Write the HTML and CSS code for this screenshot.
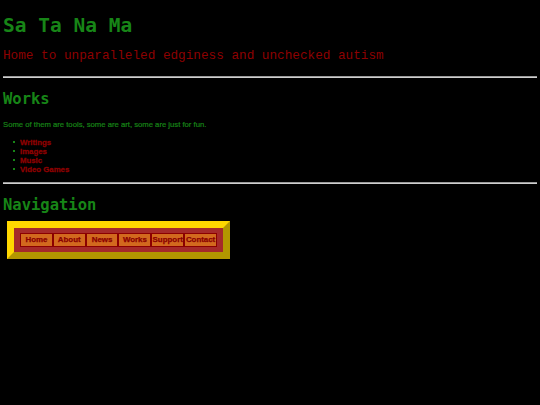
FILE: index.html
```html
<!DOCTYPE html>
<html>
<head>
<meta charset="utf-8">
<title>Sa Ta Na Ma</title>
<link rel="stylesheet" href="styles.css">
</head>
<body>
<h1 class="title">Sa Ta Na Ma</h1>
<p class="tagline">Home to unparalleled edginess and unchecked autism</p>
<hr class="rule">
<h2 class="section">Works</h2>
<p class="intro">Some of them are tools, some are art, some are just for fun.</p>
<ul class="works">
  <li><a href="#">Writings</a></li>
  <li><a href="#">Images</a></li>
  <li><a href="#">Music</a></li>
  <li><a href="#">Video Games</a></li>
</ul>
<hr class="rule rule-second">
<h2 class="section section-nav">Navigation</h2>
<div class="navbox">
  <div class="navrow">
    <a class="navbtn" href="#">Home</a>
    <a class="navbtn" href="#">About</a>
    <a class="navbtn" href="#">News</a>
    <a class="navbtn" href="#">Works</a>
    <a class="navbtn" href="#">Support</a>
    <a class="navbtn" href="#">Contact</a>
  </div>
</div>
</body>
</html>
```
FILE: styles.css
```css
html { background: #000; }
body {
  margin: 0;
  padding: 3px;
  background: #000;
  color: #1a8a1a;
  font-family: "Liberation Sans", Arial, sans-serif;
}
.title {
  margin: 11px 0 0 0;
  font-family: "DejaVu Sans Mono", monospace;
  font-weight: bold;
  font-size: 19.5px;
  line-height: 24px;
  color: #178517;
}
.tagline {
  margin: 10px 0 0 0;
  font-family: "Liberation Mono", "Courier New", monospace;
  font-size: 12.7px;
  line-height: 16px;
  color: #8e0000;
}
.rule {
  margin: 12px 0 0 0;
  height: 0;
  border: 0;
  border-top: 1px solid #9a9a9a;
  border-bottom: 1px solid #cfcfcf;
}
.rule-second { margin-top: 8.5px; }
.section {
  margin: 11px 0 0 0;
  font-family: "DejaVu Sans Mono", monospace;
  font-weight: bold;
  font-size: 15.5px;
  line-height: 20px;
  color: #178517;
}
.section-nav { margin-top: 11px; }
.intro {
  margin: 11px 0 0 0;
  font-size: 7.7px;
  line-height: 10px;
  color: #178517;
  -webkit-text-stroke: 0.2px #178517;
}
.works {
  margin: 7.5px 0 0 0;
  padding-left: 17px;
  list-style: none;
  font-size: 7.8px;
  line-height: 9px;
  color: #178517;
}
.works li::before {
  content: "";
  display: inline-block;
  width: 2px;
  height: 2px;
  margin: 0 5px 0 -7px;
  vertical-align: 2px;
  background: #178517;
}
.works a {
  color: #8e0000;
  font-weight: bold;
  text-decoration: none;
  -webkit-text-stroke: 0.3px #8e0000;
}
.navbox {
  margin: 6px 0 0 4px;
  width: 197px;
  padding: 5px 6px;
  background: #a52a2a;
  border: 7px solid;
  border-color: #ffd700 #b39700 #b39700 #ffd700;
}
.navrow {
  display: grid;
  grid-template-columns: repeat(6, 1fr);
}
.navbtn {
  display: block;
  height: 12px;
  line-height: 12px;
  text-align: center;
  background: #d2691e;
  border: 1px solid #8b0000;
  color: #8b0000;
  font-weight: bold;
  font-size: 7.9px;
  text-decoration: none;
  white-space: nowrap;
  overflow: hidden;
  -webkit-text-stroke: 0.25px #8b0000;
}
```
